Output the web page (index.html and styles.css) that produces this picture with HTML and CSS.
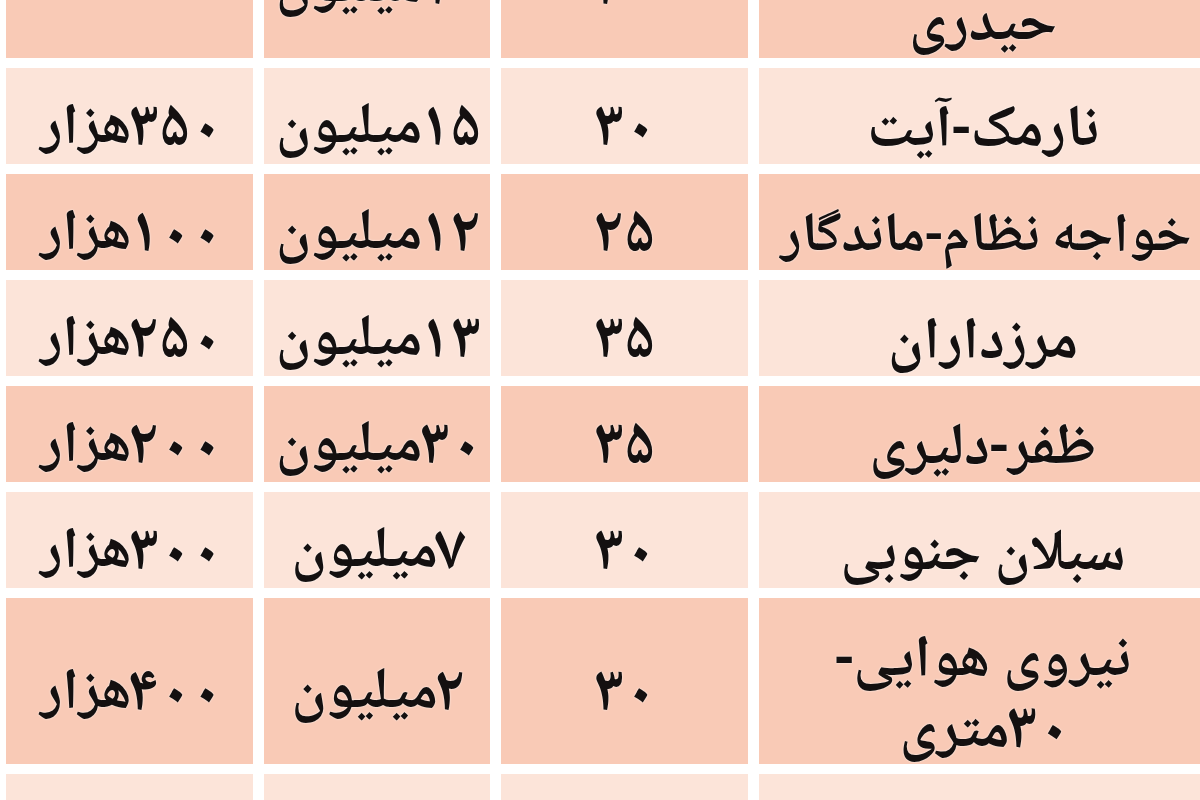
FILE: index.html
```html
<!DOCTYPE html>
<html lang="fa">
<head>
<meta charset="utf-8">
<title>جدول اجاره</title>
<link rel="stylesheet" href="styles.css">
</head>
<body>
<div class="table" dir="rtl">
  <div class="row tall dark">
    <div class="cell name">دولت‌آباد-<br>حیدری</div>
    <div class="cell"><span class="num">۳۰</span></div>
    <div class="cell"><span class="num">۱۰</span>میلیون</div>
    <div class="cell"></div>
  </div>
  <div class="row light">
    <div class="cell name">نارمک-آیت</div>
    <div class="cell"><span class="num">۳۰</span></div>
    <div class="cell"><span class="num">۱۵</span>میلیون</div>
    <div class="cell"><span class="num">۳۵۰</span>هزار</div>
  </div>
  <div class="row dark">
    <div class="cell name long">خواجه نظام-ماندگار</div>
    <div class="cell"><span class="num">۲۵</span></div>
    <div class="cell"><span class="num">۱۲</span>میلیون</div>
    <div class="cell"><span class="num">۱۰۰</span>هزار</div>
  </div>
  <div class="row light">
    <div class="cell name">مرزداران</div>
    <div class="cell"><span class="num">۳۵</span></div>
    <div class="cell"><span class="num">۱۳</span>میلیون</div>
    <div class="cell"><span class="num">۲۵۰</span>هزار</div>
  </div>
  <div class="row dark">
    <div class="cell name">ظفر-دلیری</div>
    <div class="cell"><span class="num">۳۵</span></div>
    <div class="cell"><span class="num">۳۰</span>میلیون</div>
    <div class="cell"><span class="num">۲۰۰</span>هزار</div>
  </div>
  <div class="row light">
    <div class="cell name">سبلان جنوبی</div>
    <div class="cell"><span class="num">۳۰</span></div>
    <div class="cell"><span class="num">۷</span>میلیون</div>
    <div class="cell"><span class="num">۳۰۰</span>هزار</div>
  </div>
  <div class="row tall dark">
    <div class="cell name">نیروی هوایی-<br><span class="num">۳۰</span>متری</div>
    <div class="cell"><span class="num">۳۰</span></div>
    <div class="cell"><span class="num">۲</span>میلیون</div>
    <div class="cell"><span class="num">۴۰۰</span>هزار</div>
  </div>
  <div class="row light">
    <div class="cell name"></div>
    <div class="cell"></div>
    <div class="cell"></div>
    <div class="cell"></div>
  </div>
</div>
</body>
</html>
```

FILE: styles.css
```css
html, body {
  margin: 0;
  padding: 0;
  background: #ffffff;
  overflow: hidden;
}

body {
  width: 1200px;
  height: 800px;
  padding-left: 6px;
  box-sizing: border-box;
  font-family: "Noto Naskh Arabic", "Noto Sans Arabic", "DejaVu Sans", sans-serif;
  font-weight: bold;
  color: #141010;
}

.table {
  width: 1201px;
  margin-top: -108px;
  display: flex;
  flex-direction: column;
  gap: 10px;
}

.row {
  display: grid;
  grid-template-columns: 448px 247px 226px 247px;
  column-gap: 11px;
  height: 96px;
}

.row.tall {
  height: 166px;
}

.cell {
  display: flex;
  align-items: center;
  justify-content: center;
  text-align: center;
  white-space: nowrap;
  font-size: 58px;
  line-height: 70px;
  padding-top: 30px;
  box-sizing: border-box;
  overflow: hidden;
  text-shadow: 0 0 2px #ffffff;
}

.name {
  display: block;
  align-content: center;
  font-size: 59px;
}

.name.long {
  font-size: 55px;
  padding-left: 6px;
}

.num {
  font-size: 1.1em;
  letter-spacing: 0.3em;
  margin-left: -0.05em;
  margin-right: -0.05em;
}

.dark .cell {
  background: #f9cab6;
}

.light .cell {
  background: #fce4d9;
}
```
